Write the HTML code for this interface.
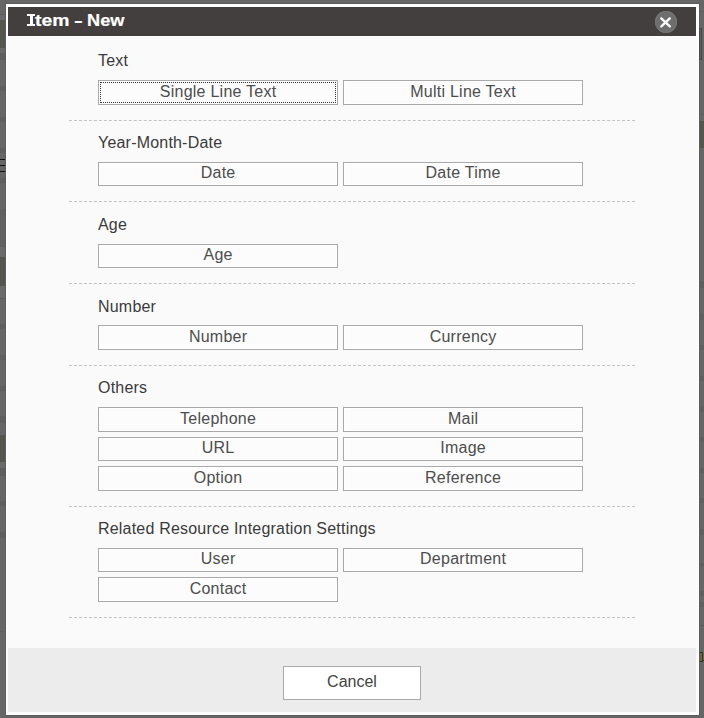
<!DOCTYPE html>
<html><head><meta charset="utf-8">
<style>
*{box-sizing:border-box;margin:0;padding:0}
html,body{width:704px;height:718px;overflow:hidden}
body{position:relative;background:#666;font-family:"Liberation Sans",sans-serif;color:#333}
.a{position:absolute}
#shd{left:5px;top:3px;width:695px;height:713px;background:#5c5c5c}
#dlg{left:6px;top:4px;width:693px;height:711px;background:#fff}
#hdr{left:8px;top:7px;width:688px;height:29px;background:#433f3e}
#bd{left:7px;top:37px;width:691px;height:676px;background:#fafafa}
#ft{left:8px;top:648px;width:688px;height:64px;background:#ececec}
#ttl span{position:absolute;top:6px;height:29px;line-height:29px;color:#fff;font-weight:bold;font-size:17px;white-space:nowrap;transform-origin:0 0;-webkit-text-stroke:.2px #fff}
.Ib{position:absolute;background:#fff}
#cls{left:655px;top:11.3px;width:22px;height:22px;border-radius:50%;background:#6e6e6e;box-shadow:inset 0 0 1px 1px #757575}
.lbl{left:98px;height:20px;line-height:20px;font-size:16px;letter-spacing:.2px;color:#3a3a3a;white-space:nowrap}
.btn{border:1px solid #a9a9a9;background:#fcfcfc;box-shadow:inset 0 0 0 1px #fff;width:240px;height:25px;text-align:center;font-size:16px;letter-spacing:.25px;line-height:22px;color:#4d4d4d;white-space:nowrap;padding-left:.2px}
.c1{left:98px}.c2{left:343px}
.dl{left:69px;width:566px;height:1px;border-top:1px dashed #c4c4c4}
#foc{left:100px;top:82px;width:236px;height:21px;border:1px dotted #333}
#cnc{left:283px;top:666px;width:138px;height:34px;border:1px solid #a9a9a9;background:#fff;text-align:center;font-size:16px;letter-spacing:0;line-height:30px;color:#444}
</style></head><body>
<div class="a" style="left:0;top:14px;width:5px;height:1px;background:#5c5c5c"></div>
<div class="a" style="left:0;top:15px;width:5px;height:5px;background:#696969"></div>
<div class="a" style="left:0;top:20px;width:5px;height:28px;background:#55554f"></div>
<div class="a" style="left:0;top:48px;width:5px;height:5px;background:#686868"></div>
<div class="a" style="left:0;top:53px;width:5px;height:7px;background:#5e5e5e"></div>
<div class="a" style="left:0;top:86px;width:5px;height:5px;background:#5f5f5f"></div>
<div class="a" style="left:0;top:117px;width:5px;height:5px;background:#5f5f5f"></div>
<div class="a" style="left:0;top:148px;width:5px;height:5px;background:#5f5f5f"></div>
<div class="a" style="left:0;top:159px;width:5px;height:1px;background:#111"></div>
<div class="a" style="left:0;top:165px;width:5px;height:1px;background:#111"></div>
<div class="a" style="left:0;top:171px;width:5px;height:1px;background:#111"></div>
<div class="a" style="left:0;top:178px;width:5px;height:5px;background:#5f5f5f"></div>
<div class="a" style="left:0;top:209px;width:5px;height:38px;background:#616161"></div>
<div class="a" style="left:0;top:247px;width:5px;height:10px;background:#6a6a6a"></div>
<div class="a" style="left:0;top:257px;width:5px;height:29px;background:#55554f"></div>
<div class="a" style="left:0;top:286px;width:5px;height:12px;background:#6a6a6a"></div>
<div class="a" style="left:0;top:298px;width:5px;height:1px;background:#5a5a5a"></div>
<div class="a" style="left:0;top:324px;width:5px;height:5px;background:#5f5f5f"></div>
<div class="a" style="left:0;top:355px;width:5px;height:5px;background:#5f5f5f"></div>
<div class="a" style="left:0;top:386px;width:5px;height:5px;background:#5f5f5f"></div>
<div class="a" style="left:0;top:416px;width:5px;height:7px;background:#5f5f5f"></div>
<div class="a" style="left:0;top:435px;width:5px;height:27px;background:#55554f"></div>
<div class="a" style="left:0;top:462px;width:5px;height:6px;background:#6a6a6a"></div>
<div class="a" style="left:0;top:468px;width:5px;height:8px;background:#5e5e5e"></div>
<div class="a" style="left:0;top:501px;width:5px;height:5px;background:#5f5f5f"></div>
<div class="a" style="left:0;top:532px;width:5px;height:6px;background:#5f5f5f"></div>
<div class="a" style="left:0;top:631px;width:5px;height:1px;background:#5f5f5f"></div>
<div class="a" style="left:700px;top:11px;width:4px;height:1px;background:#5f5f5f"></div>
<div class="a" style="left:700px;top:114px;width:4px;height:1px;background:#5f5f5f"></div>
<div class="a" style="left:700px;top:121px;width:4px;height:27px;background:#55554f"></div>
<div class="a" style="left:700px;top:281px;width:4px;height:7px;background:#5f5f5f"></div>
<div class="a" style="left:700px;top:314px;width:4px;height:6px;background:#5f5f5f"></div>
<div class="a" style="left:700px;top:345px;width:4px;height:5px;background:#5f5f5f"></div>
<div class="a" style="left:700px;top:376px;width:4px;height:5px;background:#5f5f5f"></div>
<div class="a" style="left:700px;top:406px;width:4px;height:6px;background:#5f5f5f"></div>
<div class="a" style="left:700px;top:437px;width:4px;height:5px;background:#5f5f5f"></div>
<div class="a" style="left:700px;top:468px;width:4px;height:5px;background:#5f5f5f"></div>
<div class="a" style="left:700px;top:498px;width:4px;height:5px;background:#5f5f5f"></div>
<div class="a" style="left:700px;top:529px;width:4px;height:6px;background:#5f5f5f"></div>
<div class="a" style="left:700px;top:563px;width:4px;height:3px;background:#5f5f5f"></div>
<div class="a" style="left:700px;top:591px;width:4px;height:5px;background:#5f5f5f"></div>
<div class="a" style="left:700px;top:602px;width:4px;height:5px;background:#5f5f5f"></div>
<div class="a" style="left:700px;top:625px;width:4px;height:1px;background:#5a5a5a"></div>
<div class="a" style="left:700px;top:652px;width:3px;height:10px;border-top:1px solid #2a3a14;border-right:1px solid #3a3a18;border-bottom:1px solid #2a3a14;background:#6a6444"></div>
<div class="a" style="left:703px;top:660px;width:1px;height:1px;background:#2a3a14"></div>
<div class="a" id="shd"></div>
<div class="a" id="dlg"></div>
<div class="a" style="left:699px;top:28px;width:3px;height:32px;border:1px solid #474747;background:#616161"></div>
<div class="a" style="left:7px;top:36px;width:689px;height:1px;background:#fff"></div>
<div class="a" id="hdr"></div>
<div class="a" id="bd"></div>
<div class="a" id="ft"></div>
<div id="ttl"><div class="Ib" style="left:27px;top:14px;width:8px;height:2px"></div><div class="Ib" style="left:29.6px;top:14px;width:3.2px;height:12px"></div><div class="Ib" style="left:27px;top:24px;width:8px;height:2px"></div><span id="t1" style="left:34.6px;transform:scaleX(1.14)">tem</span><span id="t2" style="left:74px;transform:scaleX(1.55)">-</span><span id="t3" style="left:86.8px;transform:scaleX(1.07)">New</span></div>
<div class="a" style="left:656px;top:34px;width:20px;height:1px;background:#47453b"></div>
<div class="a" id="cls"><svg width="22" height="22" viewBox="0 0 22 22"><path d="M6.3 7.4 L14.8 15.4 M14.8 7.4 L6.3 15.4" stroke="#fff" stroke-width="2.3" stroke-linecap="round"/></svg></div>

<div class="a lbl" style="top:51px">Text</div>
<div class="a btn c1" style="top:80px;height:25px">Single Line Text</div>
<div class="a" id="foc"></div>
<div class="a btn c2" style="top:80px;height:25px">Multi Line Text</div>
<div class="a dl" style="top:120px"></div>

<div class="a lbl" style="top:133px">Year-Month-Date</div>
<div class="a btn c1" style="top:162px;height:24px;line-height:20px">Date</div>
<div class="a btn c2" style="top:162px;height:24px;line-height:20px">Date Time</div>
<div class="a dl" style="top:201px"></div>

<div class="a lbl" style="top:215px">Age</div>
<div class="a btn c1" style="top:244px;height:24px;line-height:20px">Age</div>
<div class="a dl" style="top:283px"></div>

<div class="a lbl" style="top:297px">Number</div>
<div class="a btn c1" style="top:325px;height:25px">Number</div>
<div class="a btn c2" style="top:325px;height:25px">Currency</div>
<div class="a dl" style="top:365px"></div>

<div class="a lbl" style="top:378px">Others</div>
<div class="a btn c1" style="top:407px;height:25px">Telephone</div>
<div class="a btn c2" style="top:407px;height:25px">Mail</div>
<div class="a btn c1" style="top:437px;height:24px;line-height:20px">URL</div>
<div class="a btn c2" style="top:437px;height:24px;line-height:20px">Image</div>
<div class="a btn c1" style="top:466px;height:25px">Option</div>
<div class="a btn c2" style="top:466px;height:25px">Reference</div>
<div class="a dl" style="top:506px"></div>

<div class="a lbl" style="top:519px">Related Resource Integration Settings</div>
<div class="a btn c1" style="top:548px;height:24px;line-height:20px">User</div>
<div class="a btn c2" style="top:548px;height:24px;line-height:20px">Department</div>
<div class="a btn c1" style="top:577px;height:25px">Contact</div>
<div class="a dl" style="top:617px"></div>

<div class="a" id="cnc">Cancel</div>
</body></html>
